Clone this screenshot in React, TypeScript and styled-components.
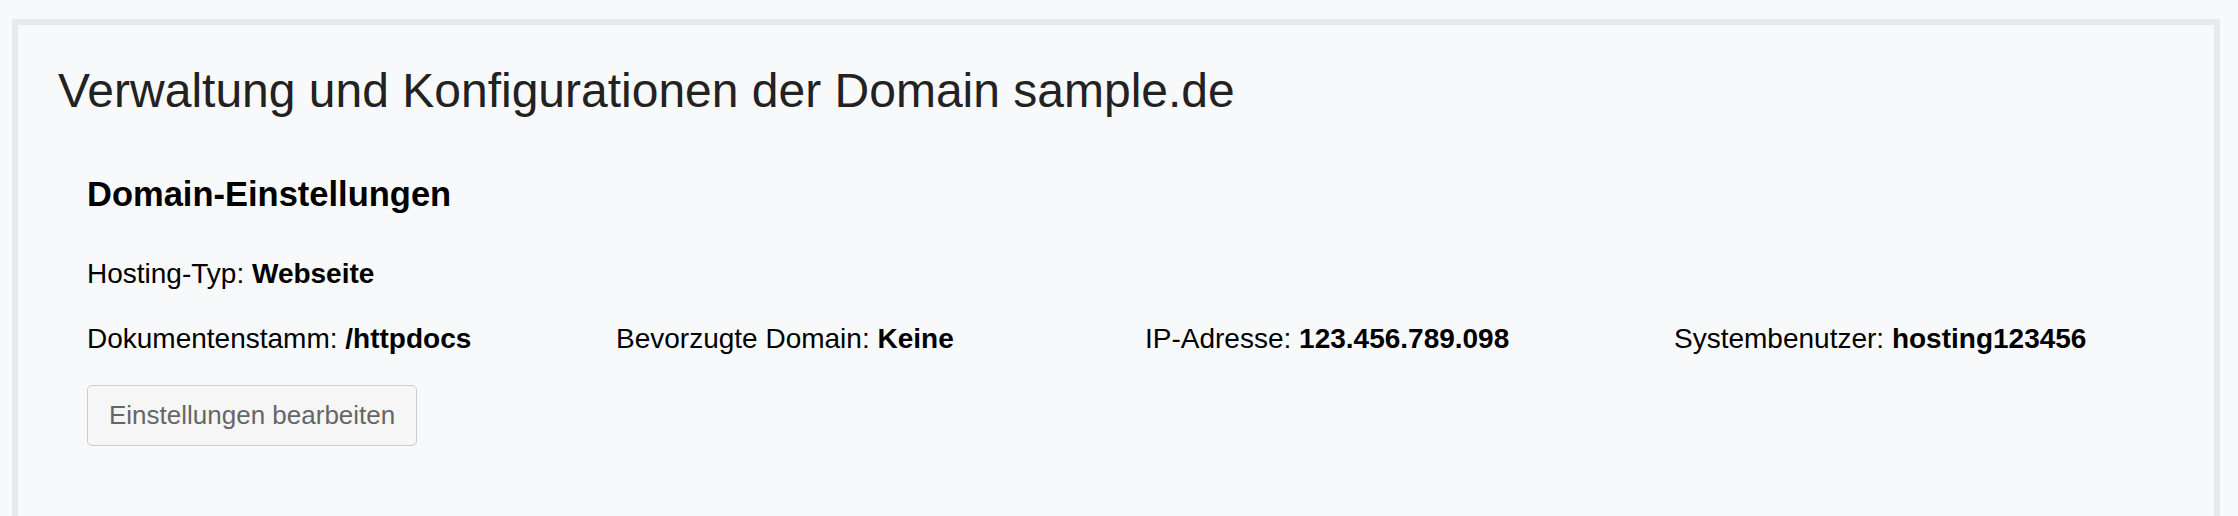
import React from "react";
import styled, { createGlobalStyle } from "styled-components";

const GlobalStyle = createGlobalStyle`
  html, body {
    margin: 0;
    padding: 0;
    background: #f8f9fb;
    font-family: "Liberation Sans", Arial, Helvetica, sans-serif;
    overflow: hidden;
  }
`;

const Page = styled.div`
  padding: 19px 18px 0 12px;
`;

const Panel = styled.section`
  border: 6px solid #e8e9ef;
  background: #f8f9fb;
  padding: 38px 40px 200px 40px;
  min-height: 600px;
`;

const Title = styled.h1`
  margin: 0;
  font-size: 48px;
  line-height: 56px;
  font-weight: 400;
  color: #222222;
`;

const Section = styled.div`
  margin-top: 55px;
  padding-left: 29px;
`;

const SectionTitle = styled.h2`
  margin: 0;
  font-size: 34.5px;
  line-height: 40px;
  font-weight: 700;
  color: #000000;
`;

const InfoLine = styled.p`
  margin: 44px 0 0 0;
  font-size: 28px;
  line-height: 32px;
  color: #000000;
`;

const InfoGrid = styled.div`
  display: grid;
  grid-template-columns: repeat(4, 529px);
  margin-top: 33px;
`;

const InfoItem = styled.div`
  font-size: 28px;
  line-height: 32px;
  color: #000000;
  white-space: nowrap;
`;

const Value = styled.strong`
  font-weight: 700;
`;

const Button = styled.button`
  margin-top: 30px;
  display: inline-block;
  font-family: inherit;
  font-size: 26px;
  line-height: 29px;
  padding: 15px 21px;
  color: #666666;
  background: #f6f6f7;
  border: 1px solid #cccccc;
  border-radius: 5px;
  cursor: pointer;
`;

const items = [
  { label: "Dokumentenstamm:", value: "/httpdocs" },
  { label: "Bevorzugte Domain:", value: "Keine" },
  { label: "IP-Adresse:", value: "123.456.789.098" },
  { label: "Systembenutzer:", value: "hosting123456" },
];

export default function App() {
  return (
    <>
      <GlobalStyle />
      <Page>
        <Panel>
          <Title>Verwaltung und Konfigurationen der Domain sample.de</Title>
          <Section>
            <SectionTitle>Domain-Einstellungen</SectionTitle>
            <InfoLine>
              Hosting-Typ: <Value>Webseite</Value>
            </InfoLine>
            <InfoGrid>
              {items.map((it) => (
                <InfoItem key={it.label}>
                  {it.label} <Value>{it.value}</Value>
                </InfoItem>
              ))}
            </InfoGrid>
            <Button>Einstellungen bearbeiten</Button>
          </Section>
        </Panel>
      </Page>
    </>
  );
}
